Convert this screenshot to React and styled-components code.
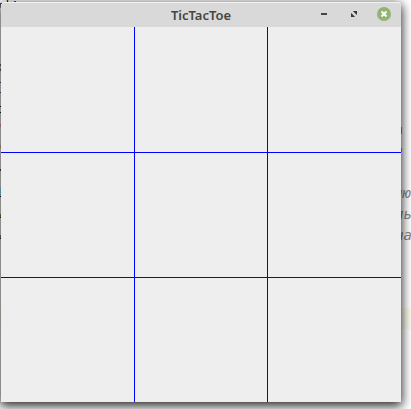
import React from "react";
import styled, { createGlobalStyle } from "styled-components";

const GlobalStyle = createGlobalStyle`
  body {
    margin: 0;
    background: #ffffff;
    overflow: hidden;
  }
`;

const marks = [
  { x: 0, y: 3, w: 2, h: 1, color: "#38404e" },
  { x: 6, y: 0, w: 1, h: 2, color: "#d3b65a" },
  { x: 7, y: 0, w: 1, h: 2, color: "#222a40" },
  { x: 8, y: 0, w: 1, h: 2, color: "#8fb5d0" },
  { x: 14, y: 1, w: 2, h: 1, color: "#34383c" },
  { x: 0, y: 4, w: 1, h: 2, color: "#2d4a78" },
  { x: 0, y: 6, w: 1, h: 2, color: "#8a5238" },
  { x: 0, y: 64, w: 1, h: 2, color: "#27405c" },
  { x: 0, y: 67, w: 1, h: 2, color: "#a27040" },
  { x: 0, y: 69, w: 1, h: 2, color: "#27405c" },
  { x: 0, y: 82, w: 1, h: 1, color: "#23364e" },
  { x: 0, y: 92, w: 1, h: 1, color: "#23364e" },
  { x: 0, y: 106, w: 1, h: 1, color: "#111111" },
  { x: 0, y: 112, w: 1, h: 1, color: "#111111" },
  { x: 0, y: 124, w: 1, h: 3, color: "#86685c" },
  { x: 0, y: 145, w: 1, h: 3, color: "#86685c" },
  { x: 0, y: 169, w: 1, h: 2, color: "#4a2414" },
  { x: 0, y: 187, w: 1, h: 9, color: "#4e8c96" },
  { x: 0, y: 196, w: 1, h: 1, color: "#111111" },
  { x: 0, y: 214, w: 1, h: 3, color: "#3f5a30" },
  { x: 0, y: 217, w: 1, h: 1, color: "#32121c" },
  { x: 0, y: 235, w: 1, h: 3, color: "#3f5a30" },
  { x: 0, y: 238, w: 1, h: 1, color: "#32121c" },
  { x: 401, y: 127, w: 1, h: 7, color: "#365880" },
  { x: 401, y: 148, w: 1, h: 4, color: "#365880" },
];

const comments = [
  { x: 394, y: 183, text: "лю", color: "#8c8c8c" },
  { x: 395, y: 204, text: "ль", color: "#8c8c8c" },
  { x: 395, y: 225, text: "на", color: "#94807c" },
];

const App = () => {
  return (
    <Desktop>
      <GlobalStyle />
      <CurrentLine />
      {comments.map((c) => (
        <Comment key={c.y} $x={c.x} $y={c.y} $color={c.color}>
          {c.text}
        </Comment>
      ))}
      <Window>
        <TitleBar>
          <Title>TicTacToe</Title>
          <Controls>
            <MinimizeIcon viewBox="0 0 6 2">
              <path d="M0 0h6v2H0z" fill="#454545" />
            </MinimizeIcon>
            <MaximizeIcon viewBox="0 0 6 6">
              <path d="M2 0h4v4L4.6 2.7 3.3 1.4zM0 2v4h4L2.7 4.6 1.4 3.3z" fill="#353535" />
            </MaximizeIcon>
            <CloseIcon viewBox="0 0 14 14">
              <circle cx="7" cy="7" r="7" fill="#92b372" />
              <path
                d="M4.5 4.5l5 5M9.5 4.5l-5 5"
                stroke="#ffffff"
                strokeWidth="1.8"
              />
            </CloseIcon>
          </Controls>
        </TitleBar>
        <Board>
          {[...Array(9).keys()].map((i) => (
            <Cell key={i} $left={i % 3 > 0} $top={i > 2} />
          ))}
        </Board>
      </Window>
      {marks.map((m, i) => (
        <Mark key={i} $x={m.x} $y={m.y} $w={m.w} $h={m.h} $color={m.color} />
      ))}
    </Desktop>
  );
};

const Desktop = styled.div`
  position: relative;
  width: 411px;
  height: 409px;
  padding: 2px 0 0 1px;
  box-sizing: border-box;
  overflow: hidden;
  background: #ffffff;
`;

// editor text peeking out from behind the window
const Comment = styled.span`
  position: absolute;
  left: ${(props) => props.$x}px;
  top: ${(props) => props.$y}px;
  color: ${(props) => props.$color};
  font: italic 14px/20px "DejaVu Sans Mono", monospace;
  white-space: nowrap;
`;

const CurrentLine = styled.div`
  position: absolute;
  left: 0;
  right: 0;
  top: 308px;
  height: 21px;
  background: #fcfaed;
`;

const Mark = styled.i`
  position: absolute;
  left: ${(props) => props.$x}px;
  top: ${(props) => props.$y}px;
  width: ${(props) => props.$w}px;
  height: ${(props) => props.$h}px;
  background: ${(props) => props.$color};
`;

const Window = styled.div`
  position: relative;
  width: 400px;
  height: 400px;
  display: flex;
  flex-direction: column;
  border-radius: 4px 4px 0 0;
  background: #eeeeee;
  box-shadow: 0 3px 11px 1px rgba(0, 0, 0, 0.85);
`;

const TitleBar = styled.div`
  position: relative;
  height: 25px;
  display: flex;
  justify-content: center;
  align-items: center;
  box-sizing: border-box;
  border-top: 1px solid #f2f2f2;
  border-radius: 4px 4px 0 0;
  background: #d9d9d9;
`;

const Title = styled.div`
  color: #454545;
  font: 600 13px/24px "Noto Sans", sans-serif;
`;

const Controls = styled.div`
  position: absolute;
  right: 10px;
  top: 4px;
  height: 14px;
  display: flex;
  align-items: center;
`;

const MinimizeIcon = styled.svg`
  width: 6px;
  height: 2px;
  margin-right: 24px;
`;

const MaximizeIcon = styled.svg`
  width: 6px;
  height: 6px;
  margin-right: 20px;
`;

const CloseIcon = styled.svg`
  width: 14px;
  height: 14px;
`;

const Board = styled.div`
  flex: 1;
  display: grid;
  grid-template-columns: 133px 133px 134px;
  grid-template-rows: repeat(3, 125px);
`;

const Cell = styled.div`
  border-left: ${(props) => (props.$left ? "1px solid #0000ff" : "none")};
  border-top: ${(props) => (props.$top ? "1px solid #0000ff" : "none")};
`;

export default App;
